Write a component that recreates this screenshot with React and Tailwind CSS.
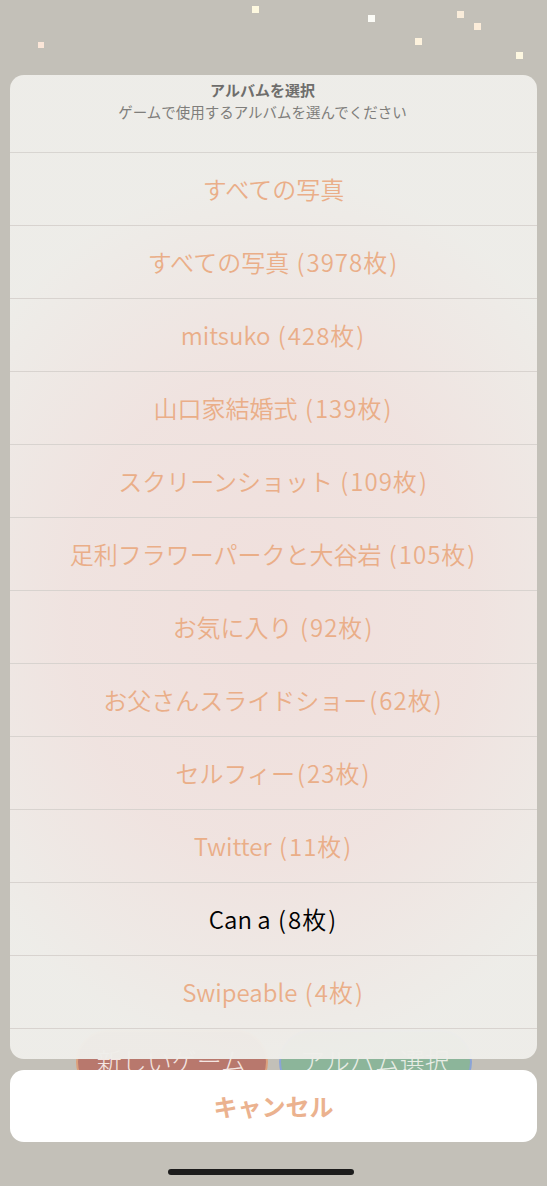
import React from "react";

const rows = [
  { t: "すべての写真" },
  { t: "すべての写真 (3978枚)" },
  { t: "mitsuko (428枚)" },
  { t: "山口家結婚式 (139枚)" },
  { t: "スクリーンショット (109枚)" },
  { t: "足利フラワーパークと大谷岩 (105枚)" },
  { t: "お気に入り (92枚)" },
  { t: "お父さんスライドショー(62枚)" },
  { t: "セルフィー(23枚)" },
  { t: "Twitter (11枚)" },
  { t: "Can a (8枚)", dark: true },
  { t: "Swipeable (4枚)" },
];

const font = { fontFamily: '"Noto Sans CJK JP", "Noto Sans", sans-serif' };

function Label({ text }) {
  const parts = [];
  let buf = "";
  const flush = () => {
    if (buf) {
      parts.push(<span key={parts.length}>{buf}</span>);
      buf = "";
    }
  };
  for (const ch of text) {
    if (ch === "(" || ch === ")") {
      flush();
      parts.push(
        <span key={parts.length} className="inline-block w-[12px] text-center">
          {ch}
        </span>
      );
    } else if (/[0-9]/.test(ch)) {
      flush();
      parts.push(
        <span key={parts.length} className="tracking-[1px]">
          {ch}
        </span>
      );
    } else {
      buf += ch;
    }
  }
  flush();
  return <span className="whitespace-pre">{parts}</span>;
}

export default function App() {
  return (
    <div
      className="relative w-[547px] h-[1186px] overflow-hidden bg-[#c3c0b8]"
      style={font}
    >
      {/* confetti */}
      <div className="absolute left-[38px] top-[42px] w-[6px] h-[6px] bg-[#fbe6d8]" />
      <div className="absolute left-[252px] top-[6px] w-[7px] h-[7px] bg-[#fdf8df]" />
      <div className="absolute left-[368px] top-[15px] w-[7px] h-[7px] bg-[#fbfbf6]" />
      <div className="absolute left-[415px] top-[38px] w-[7px] h-[7px] bg-[#fdf2dd]" />
      <div className="absolute left-[457px] top-[11px] w-[7px] h-[7px] bg-[#f9ecda]" />
      <div className="absolute left-[474px] top-[23px] w-[7px] h-[7px] bg-[#fbecd9]" />
      <div className="absolute left-[516px] top-[52px] w-[7px] h-[7px] bg-[#fdf7e0]" />

      {/* background app buttons */}
      <div className="flex justify-center gap-[11px] pt-[1030px]">
        <div className="w-[192px] h-[64px] rounded-full bg-[#b8786d] border-2 border-[#dca07c] flex items-start justify-center pt-[10px] text-[#f4e6e2] text-[25px] font-light">
          新しいゲーム
        </div>
        <div className="w-[193px] h-[64px] rounded-full bg-[#8cb59a] border-2 border-[#8ba4d6] flex items-start justify-center pt-[10px] text-[#e9ede6] text-[25px] font-light">
          アルバム選択
        </div>
      </div>

      {/* action sheet overlay */}
      <div className="absolute inset-0 flex flex-col px-[10px] pt-[75px]">
        <div className="h-[984px] rounded-[14px] overflow-hidden bg-[radial-gradient(ellipse_70%_45%_at_50%_55%,rgba(241,224,221,0.98)_0%,rgba(241,228,225,0.97)_55%,rgba(239,238,234,0.97)_100%)] flex flex-col">
          <div className="h-[78px] flex flex-col items-center pt-[4px] pr-[22px] border-b border-[#d8d5d1]">
            <div className="text-[15px] leading-[22px] font-bold text-[#6f6e6c]">アルバムを選択</div>
            <div className="text-[14.5px] leading-[22px] text-[#7f7e7b]">ゲームで使用するアルバムを選んでください</div>
          </div>
          {rows.map((r, i) => (
            <div
              key={i}
              className={`h-[73px] shrink-0 flex items-center justify-center border-b border-[#d8d3cf] text-[24px] font-[350] ${r.dark ? "text-black" : "text-[#eaae88]"}`}
            >
              <Label text={r.t} />
            </div>
          ))}
        </div>
        <div className="mt-[11px] h-[72px] rounded-[14px] bg-white flex items-center justify-center text-[24px] font-bold text-[#ebb28f]">
          キャンセル
        </div>
        <div className="flex justify-center pt-[27px] pr-[26px]">
          <div className="w-[186px] h-[6px] rounded-full bg-[#1c1c1c]" />
        </div>
      </div>
    </div>
  );
}
